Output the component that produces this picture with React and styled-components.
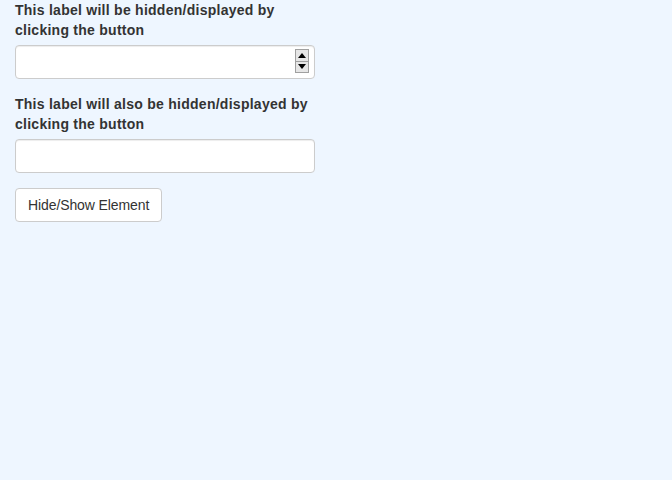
import React from "react";
import styled, { createGlobalStyle } from "styled-components";

const Global = createGlobalStyle`
  html, body { margin: 0; padding: 0; background: #eef6ff; }
  body { font-family: "Liberation Sans", Arial, sans-serif; font-size: 14px; line-height: 20px; color: #333; }
  * { box-sizing: border-box; }
`;

const Page = styled.div`
  padding: 0 15px;
  min-height: 480px;
  display: flex;
  flex-direction: column;
  align-items: flex-start;
`;

const Group = styled.div`
  width: 300px;
  margin-bottom: 15px;
  display: flex;
  flex-direction: column;
`;

const Label = styled.label`
  font-weight: bold;
  margin-bottom: 5px;
  line-height: 20px;
  letter-spacing: 0.26px;
  white-space: nowrap;
`;

const Field = styled.div`
  position: relative;
`;

const Input = styled.input`
  display: block;
  width: 100%;
  height: 34px;
  padding: 6px 12px;
  font: inherit;
  color: #555;
  background: #fff;
  border: 1px solid #ccc;
  border-radius: 4px;
  box-shadow: inset 0 1px 1px rgba(0, 0, 0, 0.075);
  outline: none;
  -moz-appearance: textfield;
  &::-webkit-inner-spin-button, &::-webkit-outer-spin-button { -webkit-appearance: none; margin: 0; }
`;

const Spinner = styled.div`
  position: absolute;
  right: 6px;
  top: 4px;
  width: 14px;
  height: 24px;
  display: flex;
  flex-direction: column;
  border: 1px solid #a0a0a0;
  background: #e6e6e6;
`;

const SpinHalf = styled.div`
  flex: 1;
  display: flex;
  align-items: center;
  justify-content: center;
  & + & { border-top: 1px solid #a0a0a0; }
`;

const Button = styled.button`
  font: inherit;
  color: #333;
  background: #fff;
  border: 1px solid #ccc;
  border-radius: 4px;
  padding: 6px 12px;
  height: 34px;
  line-height: 20px;
  letter-spacing: -0.1px;
  cursor: pointer;
`;

const Tri = ({ up }) => (
  <svg width="8" height="5" viewBox="0 0 8 5">
    <polygon points={up ? "4,0 8,5 0,5" : "0,0 8,0 4,5"} fill="#000" />
  </svg>
);

export default function App() {
  return (
    <>
      <Global />
      <Page>
        <Group>
          <Label>This label will be hidden/displayed by<br />clicking the button</Label>
          <Field>
            <Input type="number" />
            <Spinner>
              <SpinHalf><Tri up /></SpinHalf>
              <SpinHalf><Tri /></SpinHalf>
            </Spinner>
          </Field>
        </Group>
        <Group>
          <Label>This label will also be hidden/displayed by<br />clicking the button</Label>
          <Field>
            <Input type="text" />
          </Field>
        </Group>
        <Button>Hide/Show Element</Button>
      </Page>
    </>
  );
}
